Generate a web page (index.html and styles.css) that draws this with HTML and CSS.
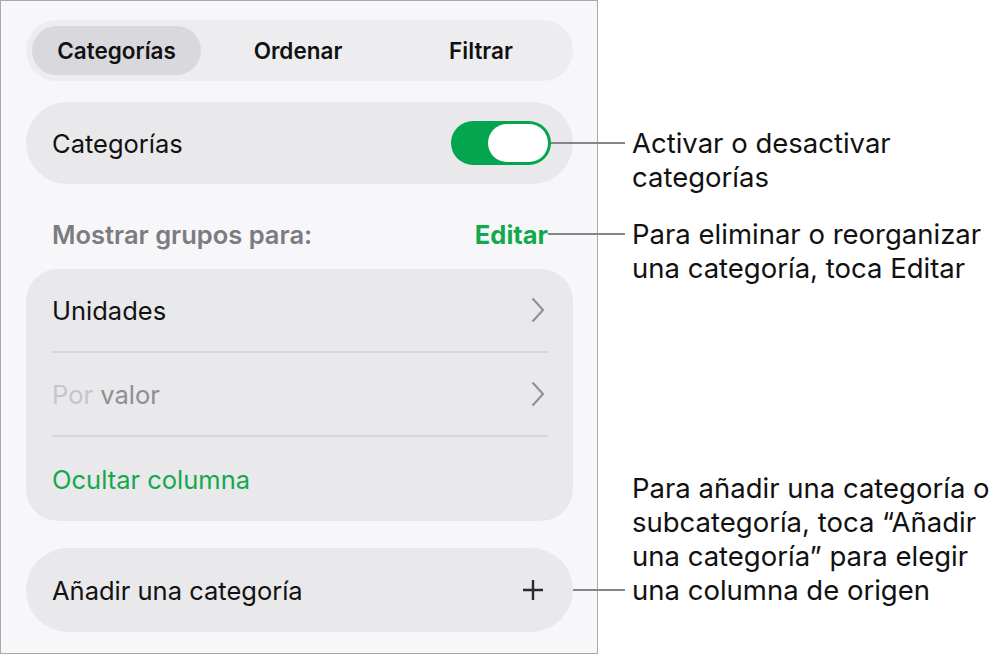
FILE: index.html
```html
<!DOCTYPE html>
<html>
<head>
  <title>Categorías</title>
  <link rel="stylesheet" href="styles.css">
</head>
<body>
  <div class="panel">
    <!-- pestañas superiores -->
    <div class="seg">
      <div class="seg-item activo">Categorías</div>
      <div class="seg-item ordenar">Ordenar</div>
      <div class="seg-item filtrar">Filtrar</div>
    </div>

    <div class="card fila-toggle">
      <span>Categorías</span>
      <div class="toggle">
        <div class="knob"></div>
        <div class="callout">
          <span class="linea l-toggle"></span>
          <p>Activar o desactivar<br>categorías</p>
        </div>
      </div>
    </div>

    <div class="grupos">
      <span>Mostrar grupos para:</span>
      <span class="editar">Editar
        <span class="callout">
          <span class="linea l-editar"></span>
          <span class="texto">Para eliminar o reorganizar<br>una categoría, toca Editar</span>
        </span>
      </span>
    </div>

    <div class="card lista">
      <div class="fila">
        <span>Unidades</span>
        <svg class="chevron" width="14" height="26" viewBox="0 0 14 26"><polyline points="2,2 12,13 2,24" /></svg>
      </div>
      <div class="fila">
        <span class="gris"><span class="claro">Por</span> valor</span>
        <svg class="chevron" width="14" height="26" viewBox="0 0 14 26"><polyline points="2,2 12,13 2,24" /></svg>
      </div>
      <div class="fila verde">Ocultar columna</div>
    </div>

    <div class="card fila-add">
      <span>Añadir una categoría</span>
      <svg class="mas" width="22" height="22" viewBox="0 0 22 22"><path d="M11 1v20M1 11h20" /></svg>
      <div class="callout abajo">
        <span class="linea l-add"></span>
        <p>Para añadir una categoría o<br>subcategoría, toca “Añadir<br>una categoría” para elegir<br>una columna de origen</p>
      </div>
    </div>
  </div>
</body>
</html>
```

FILE: styles.css
```css
body {
  margin: 0;
  background: #fff;
  font-family: Inter, "Noto Sans", sans-serif;
  color: #111;
}

.panel {
  width: 598px;
  height: 654px;
  box-sizing: border-box;
  border: 1px solid #a9a9ab;
  background-color: #f7f7f9;
  padding: 19px 24px 0 25px;
}

/* pestañas */
.seg {
  height: 61px;
  box-sizing: border-box;
  padding: 6px;
  background-color: #ededf0;
  border-radius: 31px;
  display: flex;
}

.seg-item {
  display: flex;
  align-items: center;
  justify-content: center;
  font-size: 22.5px;
  font-weight: 600;
  width: 172px;
}

.seg-item.activo {
  width: 169px;
  background-color: #d9d9dd;
  border-radius: 25px;
}

.seg-item.ordenar {
  width: 194px;
}

.card {
  background-color: #e9e9eb;
  font-size: 25.5px;
  position: relative;
}

.fila-toggle {
  margin-top: 21px;
  height: 82px;
  border-radius: 41px;
  display: flex;
  align-items: center;
  justify-content: space-between;
  padding: 0 22px 0 26px;
}

.toggle {
  width: 100px;
  height: 44px;
  box-sizing: border-box;
  padding: 3px;
  background-color: #03a64f;
  border-radius: 22px;
  display: flex;
  justify-content: flex-end;
  position: relative;
}

.knob {
  width: 60px;
  height: 38px;
  background: #fff;
  border-radius: 19px;
}

.grupos {
  height: 85px;
  box-sizing: border-box;
  padding: 15px 25px 0 26px;
  display: flex;
  align-items: center;
  justify-content: space-between;
  font-size: 25.5px;
  font-weight: 600;
  color: #7c7c80;
}

.editar {
  color: #14a84d;
  font-weight: 700;
  position: relative;
}

.lista {
  border-radius: 32px;
  padding: 0 25px 0 26px;
}

.fila {
  height: 84px;
  display: flex;
  align-items: center;
  justify-content: space-between;
  padding-right: 3px;
  border-bottom: 2px solid #d6d6d9;
  box-sizing: border-box;
}

.fila:last-child {
  border-bottom: none;
}

.gris {
  color: #8e8e93;
}

.claro {
  color: #c6c6ca;
}

.verde {
  color: #14a84d;
}

.chevron polyline {
  fill: none;
  stroke: #8e8e93;
  stroke-width: 2;
  stroke-linecap: round;
  stroke-linejoin: round;
}

.fila-add {
  margin-top: 27px;
  height: 84px;
  border-radius: 42px;
  display: flex;
  align-items: center;
  justify-content: space-between;
  padding: 0 29px 0 26px;
}

.mas path {
  stroke: #2a2a2c;
  stroke-width: 2.4;
}

/* notas a la derecha del panel */
.callout {
  position: absolute;
  left: 100%;
  top: 50%;
  transform: translateY(-17px);
  display: flex;
  align-items: flex-start;
  font-size: 27.5px;
  font-weight: 400;
  color: #111;
  line-height: 34px;
  white-space: nowrap;
}

.callout p,
.callout .texto {
  margin: 0;
  display: block;
}

.callout.abajo {
  top: auto;
  bottom: 50%;
  transform: translateY(17px);
  align-items: flex-end;
}

.linea {
  display: block;
  height: 2px;
  background-color: #86868a;
  margin: 16px 7px 0 0;
}

.callout.abajo .linea {
  margin: 0 7px 16px 0;
}

.l-toggle {
  width: 74px;
}

.l-editar {
  width: 77px;
}

.l-add {
  width: 52px;
}
```
